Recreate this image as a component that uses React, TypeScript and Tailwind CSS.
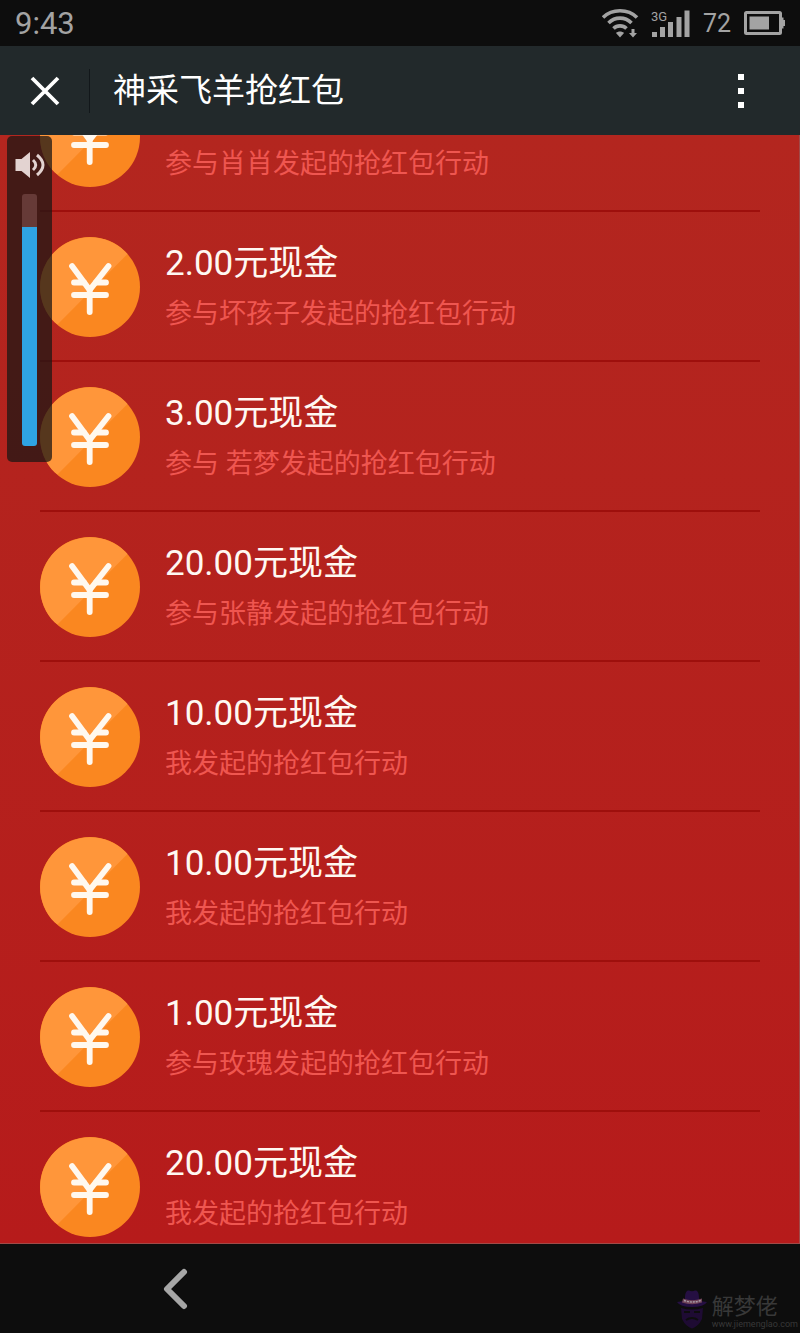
import { useState } from "react";

interface CashRecord {
    id: number;
    amount?: string;
    from: string;
}

const records: CashRecord[] = [
    { id: 1, from: "参与肖肖发起的抢红包行动" },
    { id: 2, amount: "2.00", from: "参与坏孩子发起的抢红包行动" },
    { id: 3, amount: "3.00", from: "参与 若梦发起的抢红包行动" },
    { id: 4, amount: "20.00", from: "参与张静发起的抢红包行动" },
    { id: 5, amount: "10.00", from: "我发起的抢红包行动" },
    { id: 6, amount: "10.00", from: "我发起的抢红包行动" },
    { id: 7, amount: "1.00", from: "参与玫瑰发起的抢红包行动" },
    { id: 8, amount: "20.00", from: "我发起的抢红包行动" },
];

function StatusBar() {
    return (
        <div className="flex h-[46px] shrink-0 items-center justify-between bg-[#0d0d0d] pl-[15px] pr-[14px] text-[#a3a3a3]">
            <span className="text-[31px] leading-none">9:43</span>
            <div className="flex items-center">
                {/* wifi */}
                <svg width="38" height="30" viewBox="0 0 38 30" fill="none" stroke="currentColor" strokeWidth="3.6">
                    <path d="M1 9.500C10 0.500 26 0.500 35 9.500" />
                    <path d="M6.500 15C13 8.500 23 8.500 29.500 15" />
                    <path d="M11.500 20.500C15 17 21 17 24.500 20.500" />
                    <path d="M14 25C16 23 20 23 22 25L18 29.500Z" fill="currentColor" stroke="none" />
                    <path d="M29.500 21h3v4h2.500l-4 4.500l-4-4.500h2.500Z" fill="currentColor" stroke="none" />
                </svg>
                {/* signal */}
                <div className="relative ml-[11px] h-[30px] w-[40px]">
                    <span className="absolute left-0 top-0.5 text-[13px] leading-none">3G</span>
                    <svg width="40" height="30" viewBox="0 0 40 30" fill="currentColor">
                        <rect x="1" y="24" width="5" height="5" />
                        <rect x="9" y="19" width="5" height="10" />
                        <rect x="17" y="14" width="5" height="15" />
                        <rect x="25.500" y="9" width="5" height="20" />
                        <rect x="33.500" y="2.500" width="5" height="26.500" />
                    </svg>
                </div>
                <span className="ml-[12px] text-[25px] leading-none">72</span>
                {/* battery */}
                <svg className="ml-[13px]" width="42" height="26" viewBox="0 0 42 26" fill="currentColor">
                    <rect x="1.500" y="2.500" width="35" height="21" rx="1" fill="none" stroke="currentColor" strokeWidth="3" />
                    <rect x="5.500" y="6.500" width="19.500" height="13" />
                    <path d="M38 7.500h1.500v2.500H41v6h-1.500v2.500H38Z" />
                </svg>
            </div>
        </div>
    );
}

function Header() {
    return (
        <header className="flex h-[89px] shrink-0 items-center bg-[#22292b] text-white">
            <button aria-label="关闭" className="flex h-[44px] w-[90px] items-center justify-center border-r border-[#12171a]">
                <svg width="30" height="30" viewBox="0 0 30 30" fill="none" stroke="currentColor" strokeWidth="3.8">
                    <path d="M2 2L28 28M28 2L2 28" />
                </svg>
            </button>
            <h1 className="ml-[23px] flex-1 text-[33px] leading-none">神采飞羊抢红包</h1>
            <button aria-label="更多" className="mr-[38px] flex h-[44px] w-[42px] flex-col items-center justify-center gap-2">
                <span className="size-1.5 bg-white" />
                <span className="size-1.5 bg-white" />
                <span className="size-1.5 bg-white" />
            </button>
        </header>
    );
}

function CoinIcon() {
    return (
        <svg className="size-[100px] shrink-0" viewBox="0 0 100 100">
            <circle cx="50" cy="50" r="50" fill="#fa8720" />
            <path d="M14.645 85.355A50 50 0 0 1 85.355 14.645L87.500 17L17.500 87.500Z" fill="#ff963a" />
            <g fill="none" stroke="#fff8ef" strokeWidth="5.800" strokeLinecap="round" strokeLinejoin="round">
                <path d="M32 29L49.700 53L68.500 29" />
                <path d="M34 45.500H44M56 45.500H66" />
                <path d="M34 58H66" />
                <path d="M49.700 53V75" />
            </g>
        </svg>
    );
}

function RecordRow({ record }: { record: CashRecord }) {
    return (
        <li className="flex h-[150px] items-start border-b-2 border-[#9e0f0c] pt-[25px]">
            <CoinIcon />
            <div className="ml-[25px] whitespace-nowrap">
                <div className="h-[54px] text-[35px] leading-[54px] text-[#fff8f2]">
                    {record.amount && <p>{record.amount}元现金</p>}
                </div>
                <p className="text-[27px] leading-[46px] text-[#ef5650]">{record.from}</p>
            </div>
        </li>
    );
}

function VolumePanel() {
    const [volume, setVolume] = useState(87);

    return (
        <div className="absolute left-[7px] top-px flex h-[326px] w-[45px] flex-col items-center rounded-[5px] bg-[#1d1714]/75 pt-[14px]">
            <svg width="30" height="30" viewBox="0 0 30 30" fill="#e3d3d1">
                <path d="M0.500 9h6l8.500-7v26l-8.500-7h-6Z" />
                <path d="M18 10Q23.500 15 18 20M22 5Q34 15 22 25" fill="none" stroke="#e3d3d1" strokeWidth="3" />
            </svg>
            <input
                type="range"
                aria-label="音量"
                min={0}
                max={100}
                value={volume}
                onChange={(e) => setVolume(Number(e.target.value))}
                className="mt-[14px] h-[252px] w-[15px] appearance-none rounded-[3px] [direction:rtl] [writing-mode:vertical-lr] [&::-webkit-slider-thumb]:size-0 [&::-webkit-slider-thumb]:appearance-none"
                style={{ background: `linear-gradient(to top, #2fa3e3 ${volume}%, #663a37 ${volume}%)` }}
            />
        </div>
    );
}

function Watermark() {
    return (
        <div className="flex items-end gap-1 self-end pb-1 text-[#383838]">
            <svg width="32" height="40" viewBox="0 0 32 40">
                <path d="M9 9C9 3 11 1 13 1.500Q16 3 19 1.500C21 1 23 3 23 9L24 12L31 13Q28 18 16 18Q4 18 1 13L8 12Z" fill="#250f42" />
                <path d="M7 9.500Q16 13 26 9.500L26 13.500Q16 17 6 13.500Z" fill="#6f4358" />
                <path d="M8 11.500Q16 14.500 25 11.500" fill="none" stroke="#a59aa5" strokeWidth="1.500" strokeDasharray="2 1" />
                <path d="M5 19Q16 22 27 19L26 30Q22 38 16 39.500Q10 38 6 30Z" fill="#1e0b33" />
                <path d="M8 23h6M18 23h6M10 31Q16 27 22 31" fill="none" stroke="#0d0d0d" strokeWidth="2" />
            </svg>
            <div>
                <p className="text-[22px] leading-6">解梦佬</p>
                <p className="text-[9px] leading-[10px]">www.jiemenglao.com</p>
            </div>
        </div>
    );
}

export default function App() {
    return (
        <div className="flex h-screen flex-col overflow-hidden bg-[#0d0d0d] font-[Roboto,'Noto_Sans_CJK_SC',sans-serif]">
            <StatusBar />
            <Header />
            <main className="relative min-h-0 flex-1 overflow-hidden border-r border-b border-[#a04a48] bg-linear-to-b from-[#b3261f] to-[#b61b1b]">
                {/* list scrolled so the first record sits half under the header */}
                <ul className="-mt-[73px] pl-10 pr-[39px]">
                    {records.map((record) => (
                        <RecordRow key={record.id} record={record} />
                    ))}
                </ul>
                <VolumePanel />
            </main>
            <nav className="flex h-[89px] shrink-0 items-center justify-between pl-[150px] pr-0.5">
                <button aria-label="返回" className="flex size-[50px] items-center justify-center">
                    <svg width="26" height="42" viewBox="0 0 26 42" fill="none" stroke="#a6a6a6" strokeWidth="6" strokeLinecap="round" strokeLinejoin="round">
                        <path d="M22 4L5 21L22 38" />
                    </svg>
                </button>
                <Watermark />
            </nav>
        </div>
    );
}
